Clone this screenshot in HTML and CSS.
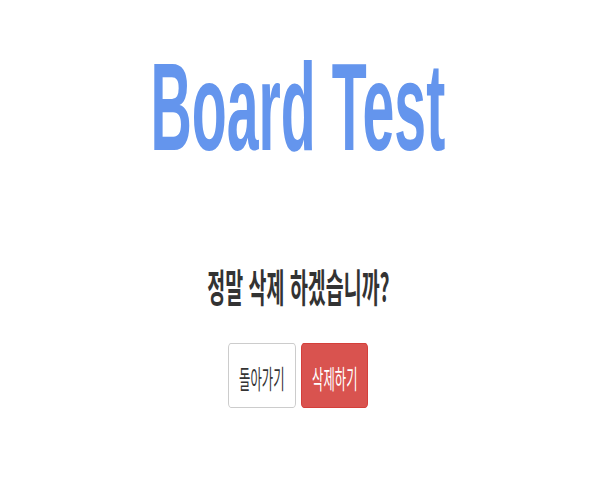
FILE: index.html
```html
<!DOCTYPE html>
<html lang="ko">
<head>
<meta charset="utf-8">
<title>Board Test</title>
<link rel="stylesheet" href="styles.css">
</head>
<body>
<main class="page">
  <h1 class="title"><span class="squeeze">Board Test</span></h1>
  <h2 class="question"><span class="squeeze">정말 삭제 하겠습니까?</span></h2>
  <div class="actions">
    <button class="btn btn-default" type="button"><span class="squeeze">돌아가기</span></button>
    <button class="btn btn-danger" type="button"><span class="squeeze">삭제하기</span></button>
  </div>
</main>
</body>
</html>
```

FILE: styles.css
```css
html, body {
  margin: 0;
  padding: 0;
  background: #ffffff;
}

.page {
  display: flex;
  flex-direction: column;
  align-items: center;
  padding-right: 4px;
  font-family: "Noto Sans CJK KR", "Noto Sans", sans-serif;
}

.squeeze {
  display: inline-block;
  transform-origin: center center;
  white-space: nowrap;
}

.title {
  margin: 44px 0 0;
  font-family: "Liberation Sans", Arial, sans-serif;
  font-weight: 700;
  font-size: 125px;
  line-height: 1;
  color: #6495ed;
}

.title .squeeze {
  transform: scaleX(0.458);
}

.question {
  margin: 97px 0 0;
  font-size: 39px;
  font-weight: 700;
  line-height: 1;
  color: #333333;
}

.question .squeeze {
  transform: scaleX(0.5);
}

.actions {
  display: flex;
  gap: 5px;
  margin-top: 38px;
}

.btn {
  display: flex;
  align-items: center;
  justify-content: center;
  width: 68px;
  height: 65px;
  padding: 0;
  font-family: "Noto Sans CJK KR", sans-serif;
  font-size: 26px;
  font-weight: 400;
  line-height: 1;
  border: 1px solid;
  border-radius: 3px / 5px;
}

.btn .squeeze {
  transform: scaleX(0.475);
  padding-top: 4px;
}

.btn-default {
  background: #ffffff;
  border-color: #cccccc;
  color: #333333;
}

.btn-danger {
  width: 67px;
  background: #d9534f;
  border-color: #d43f3a;
  color: #ffffff;
}
```
